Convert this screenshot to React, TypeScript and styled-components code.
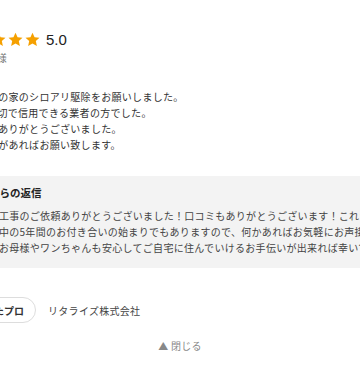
import styled, { createGlobalStyle } from 'styled-components'

const GlobalStyle = createGlobalStyle`
  body {
    margin: 0;
    background: #fff;
    font-family: "Noto Sans CJK JP", "Noto Sans", sans-serif;
  }
`

const Page = styled.div`
  width: 360px;
  height: 365px;
  overflow: hidden;
`

const Card = styled.div`
  width: 560px;
  margin-left: -43px;
  padding-top: 31px;
`

const Rating = styled.div`
  display: flex;
  align-items: center;
  gap: 2px;
  height: 16px;
`

const Score = styled.span`
  margin-left: 4px;
  font-family: "Liberation Sans", Arial, sans-serif;
  font-size: 15px;
  color: #222;
`

const Reviewer = styled.div`
  margin-top: 4px;
  font-size: 10px;
  line-height: 14px;
  color: #777;
  letter-spacing: 0.3px;
`

const Body = styled.p`
  margin: 24px 0 0;
  font-size: 10px;
  line-height: 16px;
  letter-spacing: 0.3px;
  color: #333;
  white-space: nowrap;
`

const ReplyBox = styled.div`
  margin-top: 23px;
  padding: 9px 11px 12px;
  background: #f3f3f3;
`

const ReplyTitle = styled.div`
  font-size: 10.5px;
  font-weight: 700;
  line-height: 16px;
  color: #222;
`

const ReplyText = styled.p`
  margin: 7px 0 0;
  font-size: 10px;
  line-height: 16px;
  letter-spacing: 0.3px;
  color: #444;
  white-space: nowrap;
`

const Footer = styled.div`
  display: flex;
  align-items: center;
  margin-top: 29px;
`

const Pill = styled.span`
  display: inline-flex;
  align-items: center;
  height: 24px;
  padding: 0 11px 0 6px;
  border: 1px solid #ddd;
  border-radius: 13px;
  font-size: 10px;
  font-weight: 700;
  color: #333;
`

const Company = styled.span`
  margin-left: 12px;
  font-size: 10px;
  letter-spacing: 0.3px;
  color: #444;
`

const Close = styled.div`
  margin-top: 15px;
  text-align: center;
  font-size: 10px;
  line-height: 16px;
  letter-spacing: 0.3px;
  color: #888;
`

const Star = () => (
  <svg width="15" height="15" viewBox="0 0 24 24">
    <path
      fill="#f5a000"
      d="M12 1.2l3.3 7.2 7.9.8-5.9 5.3 1.7 7.8L12 18.4l-7 3.9 1.7-7.8L.8 9.2l7.9-.8z"
    />
  </svg>
)

export default function App() {
  return (
    <>
      <GlobalStyle />
      <Page>
        <Card>
          <Rating>
            {[0, 1, 2, 3, 4].map((i) => (
              <Star key={i} />
            ))}
            <Score>5.0</Score>
          </Rating>
          <Reviewer>東京都 S様</Reviewer>
          <Body>
            実家の母の家のシロアリ駆除をお願いしました。
            <br />
            とても親切で信用できる業者の方でした。
            <br />
            この度はありがとうございました。
            <br />
            また機会があればお願い致します。
          </Body>
          <ReplyBox>
            <ReplyTitle>プロからの返信</ReplyTitle>
            <ReplyText>
              先日は工事のご依頼ありがとうございました！口コミもありがとうございます！これから工事後
              <br />
              の保証中の5年間のお付き合いの始まりでもありますので、何かあればお気軽にお声掛けください。
              <br />
              今後もお母様やワンちゃんも安心してご自宅に住んでいけるお手伝いが出来れば幸いです。
            </ReplyText>
          </ReplyBox>
          <Footer>
            <Pill>対応したプロ</Pill>
            <Company>リタライズ株式会社</Company>
          </Footer>
        </Card>
        <Close>▲ 閉じる</Close>
      </Page>
    </>
  )
}
